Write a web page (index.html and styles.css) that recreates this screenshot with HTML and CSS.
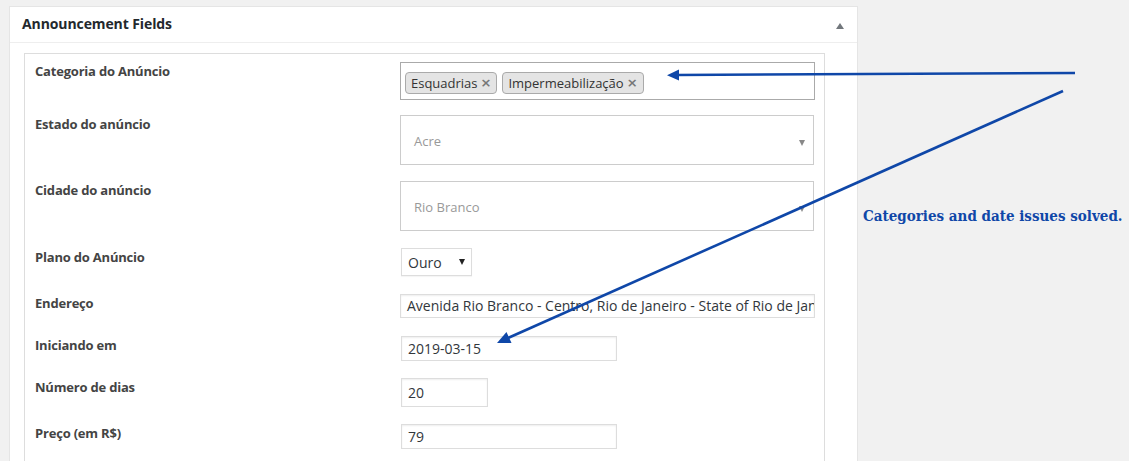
FILE: index.html
```html
<!DOCTYPE html>
<html lang="pt">
<head>
<meta charset="utf-8">
<title>Announcement Fields</title>
<link rel="stylesheet" href="styles.css">
</head>
<body>
<div class="page">
  <section class="postbox">
    <header class="postbox-head">
      <h2 class="postbox-title">Announcement Fields</h2>
      <span class="toggle-arrow"></span>
    </header>
    <div class="postbox-inside">
      <div class="form-box">
        <div class="form-grid">
          <div class="label">Categoria do Anúncio</div>
          <div class="field">
            <div class="multi-select">
              <span class="tag"><span class="tag-x">×</span>Esquadrias</span>
              <span class="tag"><span class="tag-x">×</span>Impermeabilização</span>
            </div>
          </div>

          <div class="label">Estado do anúncio</div>
          <div class="field">
            <div class="big-select"><span>Acre</span><span class="big-caret"></span></div>
          </div>

          <div class="label">Cidade do anúncio</div>
          <div class="field">
            <div class="big-select"><span>Rio Branco</span><span class="big-caret"></span></div>
          </div>

          <div class="label">Plano do Anúncio</div>
          <div class="field">
            <div class="small-select"><span>Ouro</span><span class="small-caret"></span></div>
          </div>

          <div class="label">Endereço</div>
          <div class="field">
            <div class="text-input wide">Avenida Rio Branco - Centro, Rio de Janeiro - State of Rio de Janeiro, Brazil</div>
          </div>

          <div class="label">Iniciando em</div>
          <div class="field">
            <div class="text-input medium">2019-03-15</div>
          </div>

          <div class="label">Número de dias</div>
          <div class="field">
            <div class="text-input short">20</div>
          </div>

          <div class="label">Preço (em R$)</div>
          <div class="field">
            <div class="text-input medium">79</div>
          </div>
        </div>
      </div>
    </div>
  </section>
  <aside class="note">Categories and date issues solved.</aside>
</div>

<svg class="annotations" width="1129" height="461" viewBox="0 0 1129 461" aria-hidden="true">
  <g stroke="#0f47a8" stroke-width="2.6" fill="none" stroke-linecap="butt">
    <line x1="1075" y1="73" x2="676" y2="75"/>
    <line x1="1063" y1="91" x2="508" y2="338"/>
  </g>
  <g fill="#0f47a8">
    <polygon points="667,75.2 679,69.5 679,80.5"/>
    <polygon points="497,343 506.5,332 511.5,343"/>
  </g>
</svg>
</body>
</html>
```

FILE: styles.css
```css
* { box-sizing: border-box; }

html, body {
  margin: 0;
  padding: 0;
}

body {
  background: #f1f1f1;
  font-family: "Open Sans", "Noto Sans", sans-serif;
  color: #444;
  position: relative;
  overflow: hidden;
  height: 461px;
}

.page {
  display: flex;
  align-items: flex-start;
  padding: 6px 0 0 9px;
}

.postbox {
  width: 849px;
  background: #fff;
  border: 1px solid #e5e5e5;
  flex: none;
}

.postbox-head {
  height: 36px;
  border-bottom: 1px solid #eee;
  display: flex;
  align-items: center;
  justify-content: space-between;
  padding: 0 13px 0 12px;
}

.postbox-title {
  margin: 0;
  font-size: 14px;
  font-weight: 700;
  color: #23282d;
  line-height: 20px;
  letter-spacing: -0.1px;
  margin-top: -2px;
}

.toggle-arrow {
  width: 0;
  height: 0;
  border-left: 4px solid transparent;
  border-right: 4px solid transparent;
  border-bottom: 6px solid #72777c;
  margin-top: 2px;
}

.postbox-inside {
  padding: 10px 32px 0 14px;
}

.form-box {
  border: 1px solid #ddd;
  border-bottom: none;
  height: 420px;
  padding: 8px 9px 0 10px;
}

.form-grid {
  display: grid;
  grid-template-columns: 365px 1fr;
  grid-template-rows: 53px 66px 67px 46px 42px 42px 46px auto;
}

.label {
  font-size: 13px;
  font-weight: 700;
  color: #444;
  line-height: 18px;
  padding-top: 0;
  letter-spacing: -0.2px;
}

.field {
  font-size: 14px;
}

.multi-select {
  width: 415px;
  height: 38px;
  border: 1px solid #aaa;
  padding: 9px 4px 0 4px;
  display: flex;
  gap: 5px;
  align-items: flex-start;
}

.tag {
  display: inline-flex;
  align-items: center;
  height: 22px;
  background: #e4e4e4;
  border: 1px solid #aaa;
  border-radius: 4px;
  padding: 0 5px 0 5px;
  font-size: 13px;
  color: #333;
  flex-direction: row-reverse;
  gap: 3px;
}

.tag-x {
  color: #777;
  font-weight: 700;
  font-size: 13px;
  line-height: 14px;
  font-family: "DejaVu Sans", sans-serif;
}

.big-select {
  width: 414px;
  height: 50px;
  border: 1px solid #ccc;
  display: flex;
  align-items: center;
  justify-content: space-between;
  padding: 2px 8px 0 13px;
  color: #999;
  font-size: 13px;
}

.big-caret {
  width: 0;
  height: 0;
  border-left: 3.5px solid transparent;
  border-right: 3.5px solid transparent;
  border-top: 6px solid #888;
  margin-top: 3px;
}

.small-select {
  margin-left: 1px;
  width: 71px;
  height: 28px;
  border: 1px solid #ddd;
  display: flex;
  align-items: center;
  justify-content: space-between;
  padding: 0 6px 0 6px;
  color: #32373c;
  font-size: 14px;
  box-shadow: 0 1px 1px rgba(0,0,0,0.04);
}

.small-caret {
  width: 0;
  height: 0;
  border-left: 3px solid transparent;
  border-right: 3px solid transparent;
  border-top: 6px solid #222;
}

.text-input {
  height: 24px;
  border: 1px solid #ddd;
  box-shadow: inset 0 1px 2px rgba(0,0,0,0.07);
  padding: 0 6px;
  font-size: 14px;
  line-height: 22px;
  color: #32373c;
  white-space: nowrap;
  overflow: hidden;
}

.text-input.wide { width: 415px; }
.text-input.medium { width: 216px; margin-left: 1px; height: 25px; line-height: 23px; }
.text-input.short { width: 87px; height: 29px; line-height: 27px; margin-left: 1px; }

.note {
  padding: 200px 0 0 5px;
  font-family: "DejaVu Serif Condensed", "DejaVu Serif", serif;
  font-weight: 700;
  font-size: 15px;
  color: #0f47a8;
  white-space: nowrap;
  line-height: 20px;
}

.annotations {
  position: absolute;
  left: 0;
  top: 0;
  pointer-events: none;
}
```
